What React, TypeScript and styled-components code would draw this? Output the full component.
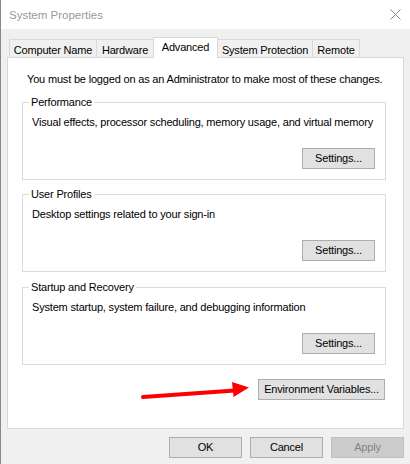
import React from 'react';
import styled, { createGlobalStyle } from 'styled-components';

const GlobalStyle = createGlobalStyle`
  html, body {
    margin: 0;
    padding: 0;
    background: #f0f0f0;
  }
  body {
    font-family: "Liberation Sans", Arial, sans-serif;
  }
`;

const Window = styled.div`
  width: 410px;
  height: 464px;
  box-sizing: border-box;
  border-left: 1px solid #888888;
  background: #f0f0f0;
  display: flex;
  flex-direction: column;
  font-size: 11px;
  letter-spacing: -0.18px;
  color: #000;
  overflow: hidden;
`;

const TitleBar = styled.div`
  height: 29px;
  flex: 0 0 29px;
  background: #ffffff;
  display: flex;
  align-items: center;
  justify-content: space-between;
  padding: 0 9px 0 8px;
`;

const Title = styled.span`
  font-size: 11.5px;
  letter-spacing: 0;
  color: #999999;
  padding-top: 1px;
`;

const CloseIcon = styled.svg`
  display: block;
`;

const Body = styled.div`
  flex: 1;
  display: flex;
  flex-direction: column;
  padding: 8px 6px 0 6px;
`;

const TabStrip = styled.div`
  height: 20px;
  display: flex;
  align-items: flex-end;
  margin-left: 2px;
`;

const Tab = styled.div<{ $w: number; $active?: boolean }>`
  box-sizing: border-box;
  width: ${p => p.$w}px;
  height: ${p => (p.$active ? 21 : 18)}px;
  margin-bottom: ${p => (p.$active ? -1 : 0)}px;
  margin-left: -1px;
  &:first-child { margin-left: 0; }
  border: 1px solid #d9d9d9;
  border-bottom: none;
  background: ${p => (p.$active ? '#ffffff' : '#f0f0f0')};
  position: relative;
  z-index: ${p => (p.$active ? 2 : 1)};
  display: flex;
  align-items: center;
  justify-content: center;
  padding-top: ${p => (p.$active ? 0 : 2)}px;
  padding-bottom: ${p => (p.$active ? 2 : 0)}px;
  white-space: nowrap;
`;

const Panel = styled.div`
  position: relative;
  box-sizing: border-box;
  height: 372px;
  flex: 0 0 372px;
  background: #ffffff;
  border: 1px solid #d9d9d9;
  padding: 14px 17px 0 14px;
  display: flex;
  flex-direction: column;
`;

const Notice = styled.div`
  line-height: 15px;
  margin-left: 5px;
  white-space: nowrap;
`;

const GroupBox = styled.fieldset<{ $gap: number }>`
  margin: ${p => p.$gap}px 0 0 0;
  border: 1px solid #dcdcdc;
  padding: 0 10px 10px 9px;
  display: flex;
  flex-direction: column;
  min-width: 0;
`;

const GroupLabel = styled.legend`
  line-height: 15px;
  padding: 0 2px;
  margin-left: -3px;
`;

const Description = styled.div`
  line-height: 15px;
  margin-top: 5px;
  white-space: nowrap;
`;

const ButtonRow = styled.div<{ $top: number }>`
  display: flex;
  justify-content: flex-end;
  gap: 8px;
  margin-top: ${p => p.$top}px;
`;

const Button = styled.button<{ $w?: number; $disabled?: boolean }>`
  box-sizing: border-box;
  width: ${p => p.$w ?? 73}px;
  height: 21px;
  padding: 0;
  font-family: inherit;
  font-size: 11px;
  letter-spacing: inherit;
  color: ${p => (p.$disabled ? '#838383' : '#000000')};
  background: ${p => (p.$disabled ? '#cccccc' : '#e1e1e1')};
  border: 1px solid ${p => (p.$disabled ? '#bfbfbf' : '#adadad')};
  border-radius: 0;
  line-height: 19px;
`;

const EnvRow = styled.div`
  display: flex;
  justify-content: flex-end;
  margin-top: 14px;
  margin-right: 1px;
`;

const Arrow = styled.svg`
  position: absolute;
  left: 127px;
  top: 320px;
  overflow: visible;
`;

const FooterRow = styled.div`
  display: flex;
  justify-content: flex-end;
  gap: 8px;
  margin-top: 8px;
`;

const groups = [
  {
    label: 'Performance',
    text: 'Visual effects, processor scheduling, memory usage, and virtual memory',
    gap: 8,
  },
  { label: 'User Profiles', text: 'Desktop settings related to your sign-in', gap: 7 },
  {
    label: 'Startup and Recovery',
    text: 'System startup, system failure, and debugging information',
    gap: 8,
  },
];

const tabs = [
  { name: 'Computer Name', w: 88 },
  { name: 'Hardware', w: 58 },
  { name: 'Advanced', w: 65, active: true },
  { name: 'System Protection', w: 96 },
  { name: 'Remote', w: 48 },
];

export default function App() {
  return (
    <>
      <GlobalStyle />
      <Window>
        <TitleBar>
          <Title>System Properties</Title>
          <CloseIcon width="11" height="11" viewBox="0 0 11 11">
            <path d="M0.5 0.5 L10.5 10.5 M10.5 0.5 L0.5 10.5" stroke="#8a8a8a" strokeWidth="1" fill="none" />
          </CloseIcon>
        </TitleBar>
        <Body>
          <TabStrip>
            {tabs.map(t => (
              <Tab key={t.name} $w={t.w} $active={t.active}>
                {t.name}
              </Tab>
            ))}
          </TabStrip>
          <Panel>
            <Notice>You must be logged on as an Administrator to make most of these changes.</Notice>
            {groups.map(g => (
              <GroupBox key={g.label} $gap={g.gap}>
                <GroupLabel>{g.label}</GroupLabel>
                <Description>{g.text}</Description>
                <ButtonRow $top={18}>
                  <Button>Settings...</Button>
                </ButtonRow>
              </GroupBox>
            ))}
            <EnvRow>
              <Button $w={127}>Environment Variables...</Button>
            </EnvRow>
            <Arrow width="118" height="24" viewBox="0 0 118 24">
              <path d="M8 19 L100 12.5" stroke="#ff0000" strokeWidth="4" strokeLinecap="round" fill="none" />
              <polygon points="97,4 114,9.5 98.5,19" fill="#ff0000" />
            </Arrow>
          </Panel>
          <FooterRow>
            <Button>OK</Button>
            <Button>Cancel</Button>
            <Button $disabled>Apply</Button>
          </FooterRow>
        </Body>
      </Window>
    </>
  );
}
